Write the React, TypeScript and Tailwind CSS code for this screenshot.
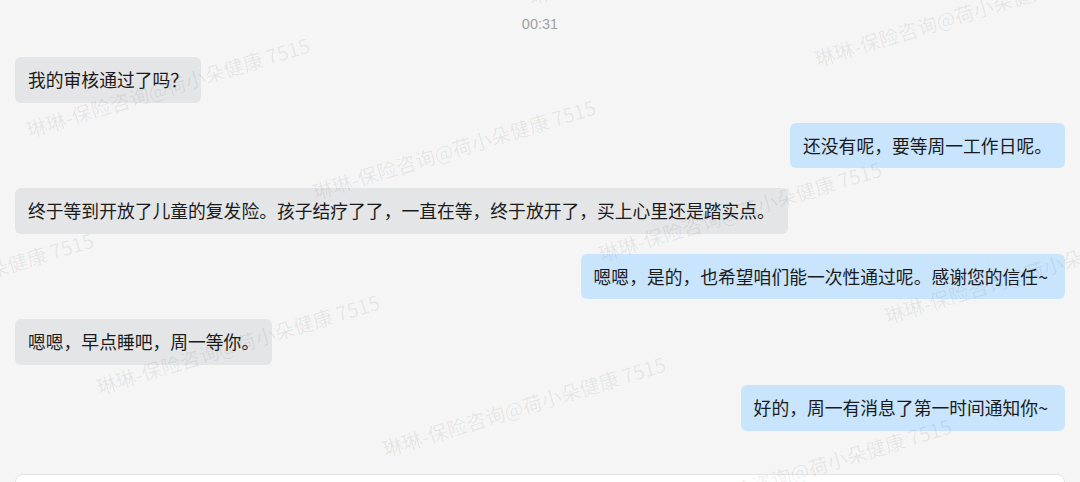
import React from "react";

const FONT = "font-['Noto_Sans_CJK_SC','Noto_Sans',sans-serif]";

type Msg = { side: "l" | "r"; text: string };

const msgs: Msg[] = [
  { side: "l", text: "我的审核通过了吗？" },
  { side: "r", text: "还没有呢，要等周一工作日呢。" },
  { side: "l", text: "终于等到开放了儿童的复发险。孩子结疗了了，一直在等，终于放开了，买上心里还是踏实点。" },
  { side: "r", text: "嗯嗯，是的，也希望咱们能一次性通过呢。感谢您的信任~" },
  { side: "l", text: "嗯嗯，早点睡吧，周一等你。" },
  { side: "r", text: "好的，周一有消息了第一时间通知你~" },
];

const WM = "琳琳-保险咨询@荷小朵健康 7515";

function Watermarks() {
  const items: { x: number; y: number; k: string }[] = [];
  for (let r = -1; r <= 2; r++) {
    for (let c = -2; c <= 4; c++) {
      const x = 30 + 286 * c + 70 * r;
      const y = 140 + 62 * c + 257 * r;
      if (x > 1100 || x < -320 || y < -20 || y > 620) continue;
      items.push({ x, y, k: `${r}-${c}` });
    }
  }
  return (
    <div className="pointer-events-none absolute inset-0 overflow-hidden">
      {items.map((it) => (
        <span
          key={it.k}
          className="absolute whitespace-nowrap text-[20px] leading-[20px] text-black/[0.07] origin-bottom-left rotate-[-17deg]"
          style={{ left: it.x, top: it.y - 20 }}
        >
          {WM}
        </span>
      ))}
    </div>
  );
}

function BubbleText({ text }: { text: string }) {
  if (text.endsWith("~")) {
    return (
      <>
        {text.slice(0, -1)}
        <span className="mr-[4px]">~</span>
      </>
    );
  }
  return <>{text}</>;
}

export default function App() {
  return (
    <div className={`relative h-[482px] w-[1080px] overflow-hidden bg-[#f5f5f5] ${FONT}`}>
      <div className="flex flex-col px-[15px]">
        <div className="mt-[14px] text-center text-[14.5px] leading-[20px] text-[#a0a0a0] font-['Liberation_Sans',sans-serif]">
          00:31
        </div>
        <div className="mt-[23px] flex flex-col gap-[20px]">
          {msgs.map((m, i) => (
            <div key={i} className={`flex ${m.side === "l" ? "justify-start" : "justify-end"}`}>
              <div
                className={`rounded-[6px] px-[13px] py-[10px] text-[17.8px] leading-[25.6px] text-[#1a1a1a] whitespace-nowrap ${
                  m.side === "l" ? "bg-[#e4e5e7]" : "bg-[#c9e5fd]"
                }`}
              >
                <BubbleText text={m.text} />
              </div>
            </div>
          ))}
        </div>
        <div className="mt-[43px] h-[60px] rounded-t-[8px] border border-[#e4e4e4] bg-white" />
      </div>
      <Watermarks />
    </div>
  );
}
